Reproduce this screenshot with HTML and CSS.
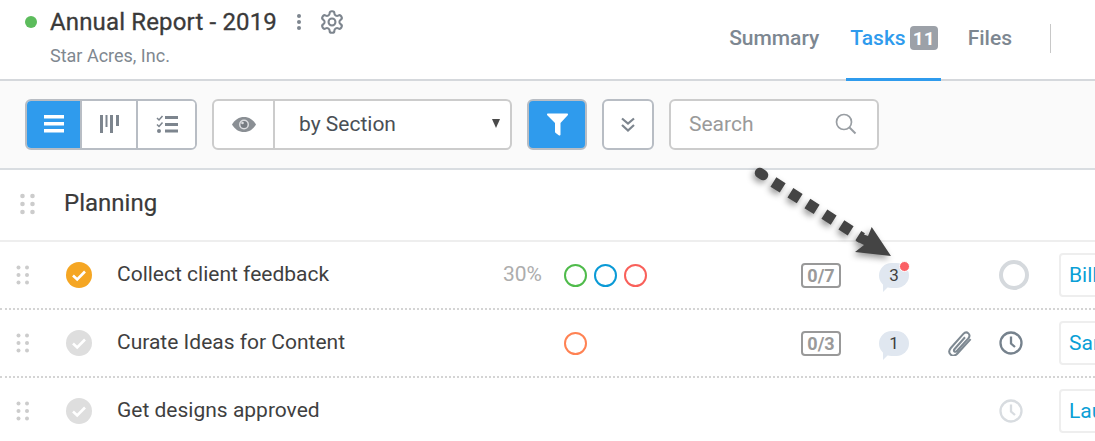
FILE: index.html
```html
<!DOCTYPE html>
<html lang="en">
<head>
  <meta charset="UTF-8">
  <title>Annual Report - 2019</title>
  <link rel="stylesheet" href="styles.css">
</head>
<body>
  <div class="page">
    <header class="header">
      <div class="project">
        <div class="project-title">
          <span class="status-dot"></span>
          <h1>Annual Report - 2019</h1>
          <svg class="kebab" width="6" height="18" viewBox="0 0 6 18"><circle cx="3" cy="3" r="2"/><circle cx="3" cy="9" r="2"/><circle cx="3" cy="15" r="2"/></svg>
          <svg class="gear" width="26" height="26" viewBox="0 0 24 24"><path d="M12.22 2h-.44a2 2 0 0 0-2 2v.18a2 2 0 0 1-1 1.73l-.43.25a2 2 0 0 1-2 0l-.15-.08a2 2 0 0 0-2.73.73l-.22.38a2 2 0 0 0 .73 2.73l.15.1a2 2 0 0 1 1 1.72v.51a2 2 0 0 1-1 1.74l-.15.09a2 2 0 0 0-.73 2.73l.22.38a2 2 0 0 0 2.73.73l.15-.08a2 2 0 0 1 2 0l.43.25a2 2 0 0 1 1 1.73V20a2 2 0 0 0 2 2h.44a2 2 0 0 0 2-2v-.18a2 2 0 0 1 1-1.73l.43-.25a2 2 0 0 1 2 0l.15.08a2 2 0 0 0 2.73-.73l.22-.39a2 2 0 0 0-.73-2.73l-.15-.08a2 2 0 0 1-1-1.74v-.5a2 2 0 0 1 1-1.74l.15-.09a2 2 0 0 0 .73-2.73l-.22-.38a2 2 0 0 0-2.73-.73l-.15.08a2 2 0 0 1-2 0l-.43-.25a2 2 0 0 1-1-1.73V4a2 2 0 0 0-2-2z"/><circle cx="12" cy="12" r="3.2"/></svg>
        </div>
        <div class="client">Star Acres, Inc.</div>
      </div>
      <nav class="tabs">
        <a class="tab">Summary</a>
        <a class="tab tab-active">Tasks <span class="tab-count">11</span></a>
        <a class="tab">Files</a>
        <span class="tab-divider"></span>
      </nav>
    </header>

    <div class="toolbar">
      <div class="btn-group">
        <button class="tool-btn tool-active">
          <svg width="20" height="18" viewBox="0 0 20 18"><path d="M0 0h20v3.5H0zM0 7h20v3.5H0zM0 14h20v3.5H0z" fill="#fff"/></svg>
        </button>
        <button class="tool-btn">
          <svg class="kanban" width="20" height="19" viewBox="0 0 20 19" fill="#7d858e"><path d="M0 0h3v18H0zM5.5 0h2v12h-2zM10 0h3v18h-3zM16 0h3v11h-3z"/></svg>
        </button>
        <button class="tool-btn tool-last">
          <svg width="22" height="18" viewBox="0 0 22 18"><path d="M1 3l2 2 3.5-4M1 9.500l2 2 3.500-4" fill="none" stroke="#7d858e" stroke-width="1.5"/><circle cx="3" cy="16" r="2" fill="#7d858e"/><path d="M9 1h13v3H9zM9 8h13v3H9zM9 14.5h13v3H9z" fill="#7d858e"/></svg>
        </button>
      </div>

      <div class="view-select">
        <div class="view-eye">
          <svg width="24" height="15" viewBox="0 0 24 15"><path d="M0 7.5C3 2.5 7 0 12 0s9 2.5 12 7.5C21 12.5 17 15 12 15S3 12.5 0 7.5z" fill="#8a8f94"/><circle cx="12" cy="7.5" r="5" fill="#dcdde0"/><circle cx="12" cy="7.5" r="3.5" fill="#777c82"/><circle cx="10.5" cy="6" r="1.3" fill="#dcdde0"/></svg>
        </div>
        <div class="view-value">by Section <span class="caret"></span></div>
      </div>

      <button class="filter-btn">
        <svg width="23" height="23" viewBox="0 0 23 23"><path d="M1 1.500C1 .8 1.500.5 2 .5h19c.6 0 1 .4 1 1 0 .3-.1.5-.3.7L14.500 10v11.500c0 1-1 1.300-1.800.8l-3-2.300c-.4-.3-.7-.6-.7-1.200V10L1.300 2.200C1.100 2 1 1.800 1 1.500z" fill="#fff"/></svg>
      </button>

      <button class="collapse-btn">
        <svg width="14" height="15" viewBox="0 0 14 15"><path d="M1 1.500l6 5 6-5M1 8l6 5.500L13 8" fill="none" stroke="#7d858e" stroke-width="2.2"/></svg>
      </button>

      <div class="search">
        <span class="search-text">Search</span>
        <svg width="22" height="22" viewBox="0 0 22 22"><circle cx="9" cy="9" r="7.5" fill="none" stroke="#999ea3" stroke-width="1.7"/><path d="M14.500 14.500l6 6" stroke="#999ea3" stroke-width="2"/></svg>
      </div>
    </div>

    <section class="section-head">
      <svg class="grip grip-big" width="15" height="22" viewBox="0 0 15 22"><circle cx="2.5" cy="3" r="2.3"/><circle cx="12.5" cy="3" r="2.3"/><circle cx="2.5" cy="11" r="2.3"/><circle cx="12.5" cy="11" r="2.3"/><circle cx="2.5" cy="19" r="2.3"/><circle cx="12.5" cy="19" r="2.3"/></svg>
      <h2>Planning</h2>
    </section>

    <div class="task">
      <svg class="grip" width="14" height="20" viewBox="0 0 14 20"><circle cx="2.5" cy="2.5" r="2"/><circle cx="11" cy="2.5" r="2"/><circle cx="2.5" cy="10" r="2"/><circle cx="11" cy="10" r="2"/><circle cx="2.5" cy="17.5" r="2"/><circle cx="11" cy="17.5" r="2"/></svg>
      <span class="check check-on"><svg width="16" height="13" viewBox="0 0 16 13"><path d="M2 6.5l4.200 4L14 2.500" fill="none" stroke="#fff" stroke-width="2.6"/></svg></span>
      <span class="task-name">Collect client feedback</span>
      <span class="task-pct">30%</span>
      <span class="tags"><i class="tag tag-green"></i><i class="tag tag-blue"></i><i class="tag tag-red"></i></span>
      <span class="subtasks">0/7</span>
      <span class="comments"><span class="bubble">3<i class="unread"></i></span></span>
      <span class="attach"></span>
      <span class="clock"><i class="ring"></i></span>
      <span class="assignee">Bill</span>
    </div>

    <div class="task">
      <svg class="grip" width="14" height="20" viewBox="0 0 14 20"><circle cx="2.5" cy="2.5" r="2"/><circle cx="11" cy="2.5" r="2"/><circle cx="2.5" cy="10" r="2"/><circle cx="11" cy="10" r="2"/><circle cx="2.5" cy="17.5" r="2"/><circle cx="11" cy="17.5" r="2"/></svg>
      <span class="check"><svg width="16" height="13" viewBox="0 0 16 13"><path d="M2 6.5l4.200 4L14 2.500" fill="none" stroke="#fff" stroke-width="2.6"/></svg></span>
      <span class="task-name">Curate Ideas for Content</span>
      <span class="task-pct"></span>
      <span class="tags"><i class="tag tag-orange"></i></span>
      <span class="subtasks">0/3</span>
      <span class="comments"><span class="bubble">1</span></span>
      <span class="attach">
        <svg width="24" height="25" viewBox="3 1 19 20"><path d="M21 7.500L10.500 19c-1.800 2-4 2.200-5.500.8-1.500-1.400-1.300-3.600.3-5.400L15 3.500c1.300-1.400 3-1.700 4.200-.6 1.200 1.100 1 2.800-.2 4.200L10 17c-.6.700-1.500.9-2 .4-.5-.5-.4-1.300.2-2L16.500 6" fill="none" stroke="#7e8992" stroke-width="1.6"/></svg>
      </span>
      <span class="clock">
        <svg width="24" height="24" viewBox="0 0 24 24"><circle cx="12" cy="12" r="10.5" fill="none" stroke="#76828d" stroke-width="2.3"/><path d="M12 5.500V12.500l4 3.500" fill="none" stroke="#76828d" stroke-width="2.3"/></svg>
      </span>
      <span class="assignee">Sam</span>
    </div>

    <div class="task">
      <svg class="grip" width="14" height="20" viewBox="0 0 14 20"><circle cx="2.5" cy="2.5" r="2"/><circle cx="11" cy="2.5" r="2"/><circle cx="2.5" cy="10" r="2"/><circle cx="11" cy="10" r="2"/><circle cx="2.5" cy="17.5" r="2"/><circle cx="11" cy="17.5" r="2"/></svg>
      <span class="check"><svg width="16" height="13" viewBox="0 0 16 13"><path d="M2 6.5l4.200 4L14 2.500" fill="none" stroke="#fff" stroke-width="2.6"/></svg></span>
      <span class="task-name">Get designs approved</span>
      <span class="task-pct"></span>
      <span class="tags"></span>
      <span class="subtasks-empty"></span>
      <span class="comments"></span>
      <span class="attach"></span>
      <span class="clock">
        <svg width="24" height="24" viewBox="0 0 24 24"><circle cx="12" cy="12" r="10.5" fill="none" stroke="#d8dce0" stroke-width="2.3"/><path d="M12 5.500V12.500l4 3.500" fill="none" stroke="#d8dce0" stroke-width="2.3"/></svg>
      </span>
      <span class="assignee">Lau</span>
    </div>

    <!-- annotation drawn over the screenshot -->
    <svg class="callout" width="150" height="100" viewBox="750 165 150 100">
      <path d="M760 173l3 2" stroke="#444" stroke-width="10.500" stroke-linecap="round"/>
      <path d="M773.400 182L862 238" fill="none" stroke="#444" stroke-width="11" stroke-dasharray="11 9.100"/>
      <path d="M871.700 227L891 256 855 252 864 245 856 241 861 233.500 868 236z" fill="#444"/>
    </svg>
  </div>
</body>
</html>
```

FILE: styles.css
```css
* {
  box-sizing: border-box;
}

body {
  margin: 0;
  background: #fff;
  font-family: Roboto, "Liberation Sans", sans-serif;
  color: #3a3a3a;
  overflow: hidden;
}

.page {
  position: relative;
  width: 1095px;
  height: 441px;
  overflow: hidden;
}

/* header */
.header {
  height: 81px;
  display: flex;
  justify-content: space-between;
  border-bottom: 2px solid #d5d8dc;
}

.project {
  padding: 8px 0 0 25px;
}

.project-title {
  display: flex;
  align-items: center;
  height: 28px;
}

.status-dot {
  width: 12px;
  height: 12px;
  border-radius: 50%;
  background: #5cbc5c;
  margin-right: 13px;
}

h1 {
  margin: 0;
  font-size: 24px;
  font-weight: 400;
  letter-spacing: 0.15px;
  -webkit-text-stroke: 0.3px #3a3a3a;
  color: #3a3a3a;
  white-space: nowrap;
}

.kebab {
  fill: #7d858e;
  margin: 0 0 0 19px;
}

.gear {
  fill: none;
  stroke: #7d858e;
  stroke-width: 1.9;
  margin-left: 17px;
}

.client {
  margin: 9px 0 0 25px;
  font-size: 18px;
  color: #7f8890;
}

.tabs {
  display: flex;
  align-items: flex-start;
  padding-right: 44px;
}

.tab {
  display: flex;
  align-items: center;
  height: 81px;
  padding: 0 0 5px;
  margin-right: 27px;
  font-size: 21px;
  font-weight: 500;
  color: #7d8791;
  white-space: nowrap;
}

.tab-active {
  color: #2f9bed;
  border-bottom: 3px solid #2f9bed;
  padding: 0 3px 2px 4px;
  gap: 4px;
}

.tab-count {
  display: inline-block;
  width: 28px;
  height: 24px;
  line-height: 25px;
  text-align: center;
  border-radius: 4px;
  background: #9ca1a8;
  color: #fff;
  font-size: 19px;
  font-weight: 700;
}

.tab-divider {
  width: 1px;
  height: 29px;
  margin: 24px 0 0 11px;
  background: #c8c8c8;
}

/* toolbar */
.toolbar {
  height: 89px;
  display: flex;
  align-items: center;
  padding: 0 0 1px 25px;
  background: #fafafa;
  border-bottom: 2px solid #d9dde1;
}

button {
  display: flex;
  align-items: center;
  justify-content: center;
  margin: 0;
  padding: 0;
  background: #fff;
  font: inherit;
}

.btn-group {
  display: flex;
  width: 172px;
  height: 51px;
  border: 2px solid #b8bdc4;
  border-radius: 6px;
  overflow: hidden;
  background: #fff;
}

.tool-btn {
  flex: 0 0 56px;
  border: 0;
  border-right: 2px solid #b8bdc4;
}

.tool-active {
  flex-basis: 55px;
  background: #2f9bed;
}

.tool-last {
  flex: 1;
  border-right: 0;
}

.kanban {
  margin-left: 2px;
}

.view-select {
  display: flex;
  width: 300px;
  height: 51px;
  margin-left: 15px;
  border: 2px solid #ccc;
  border-radius: 6px;
  background: #fff;
}

.view-eye {
  display: flex;
  align-items: center;
  justify-content: center;
  width: 61px;
  border-right: 2px solid #ccc;
}

.view-value {
  display: flex;
  align-items: center;
  justify-content: space-between;
  flex: 1;
  padding: 0 10px 0 24px;
  font-size: 21px;
  color: #4a4f55;
}

.caret {
  width: 0;
  height: 0;
  border-left: 4.5px solid transparent;
  border-right: 4.5px solid transparent;
  border-top: 9px solid #4a4a4a;
  margin-bottom: 1px;
}

.filter-btn {
  width: 60px;
  height: 51px;
  margin-left: 15px;
  border: 2px solid #b8bdc4;
  border-radius: 6px;
  background: #2f9bed;
}

.collapse-btn {
  width: 52px;
  height: 51px;
  margin-left: 15px;
  border: 2px solid #b8bdc4;
  border-radius: 6px;
}

.search {
  display: flex;
  align-items: center;
  justify-content: space-between;
  width: 210px;
  height: 51px;
  margin-left: 15px;
  padding: 0 20px 0 18px;
  border: 2px solid #ccc;
  border-radius: 6px;
  background: #fff;
}

.search-text {
  font-size: 21px;
  color: #9a9a9a;
}

/* list */
.grip {
  fill: #ccc;
}

.section-head {
  display: flex;
  align-items: center;
  height: 72px;
  padding: 0 0 3px 20px;
  border-bottom: 2px solid #eee;
}

.grip-big {
  flex: none;
}

h2 {
  margin: 0 0 2px 29px;
  font-size: 24px;
  font-weight: 400;
  -webkit-text-stroke: 0.2px #3a3a3a;
  color: #3a3a3a;
}

.task {
  display: grid;
  grid-template-columns: 50px 51px 333px 92px 259px 78px 69px 51px 60px 60px;
  align-items: center;
  height: 68px;
  padding-left: 16px;
  border-bottom: 2px dotted #d4d4d4;
}

.task:last-of-type {
  border-bottom-color: transparent;
}

.check {
  display: flex;
  align-items: center;
  justify-content: center;
  width: 26px;
  height: 26px;
  border-radius: 50%;
  background: #dedede;
}

.check-on {
  background: #f5a623;
}

.task-name {
  margin-bottom: 2px;
  font-size: 21px;
  color: #3f3f3f;
  white-space: nowrap;
}

.task-pct {
  margin-bottom: 2px;
  font-size: 21px;
  color: #adadad;
  text-align: right;
}

.tags {
  display: flex;
  gap: 7px;
  padding-left: 22px;
}

.tag {
  width: 23px;
  height: 23px;
  border: 2.5px solid;
  border-radius: 50%;
}

.tag-green { border-color: #4fbb4b; }
.tag-blue { border-color: #0a9ad6; }
.tag-red { border-color: #f9605a; }
.tag-orange { border-color: #ff8253; }

.subtasks {
  justify-self: start;
  width: 40px;
  height: 25px;
  line-height: 21px;
  text-align: center;
  border: 2px solid #999;
  border-radius: 4px;
  font-size: 18px;
  font-weight: 700;
  color: #9a9a9a;
}

.comments {
  display: flex;
}

.bubble {
  position: relative;
  width: 30px;
  height: 25px;
  line-height: 25px;
  text-align: center;
  border-radius: 13px;
  background: #e0e7f0;
  font-size: 17px;
  color: #3f3f3f;
}

.bubble::after {
  content: "";
  position: absolute;
  left: 4px;
  top: 20px;
  border-left: 9px solid #e0e7f0;
  border-bottom: 9px solid transparent;
}

.unread {
  position: absolute;
  top: -2px;
  right: -1px;
  width: 11px;
  height: 11px;
  border: 1px solid #fff;
  border-radius: 50%;
  background: #fb6065;
}

.attach,
.clock {
  display: flex;
}

.ring {
  width: 30px;
  height: 30px;
  border: 4px solid #d5d9dd;
  border-radius: 50%;
}

.assignee {
  display: block;
  width: 60px;
  height: 44px;
  line-height: 40px;
  padding-left: 8px;
  border: 2px solid #eee;
  border-radius: 4px;
  font-size: 21px;
  color: #0b9fd6;
  white-space: nowrap;
}

/* arrow over the list */
.callout {
  position: absolute;
  left: 750px;
  top: 165px;
  filter: drop-shadow(-2px 3px 3px rgba(0, 0, 0, 0.4));
}
```
